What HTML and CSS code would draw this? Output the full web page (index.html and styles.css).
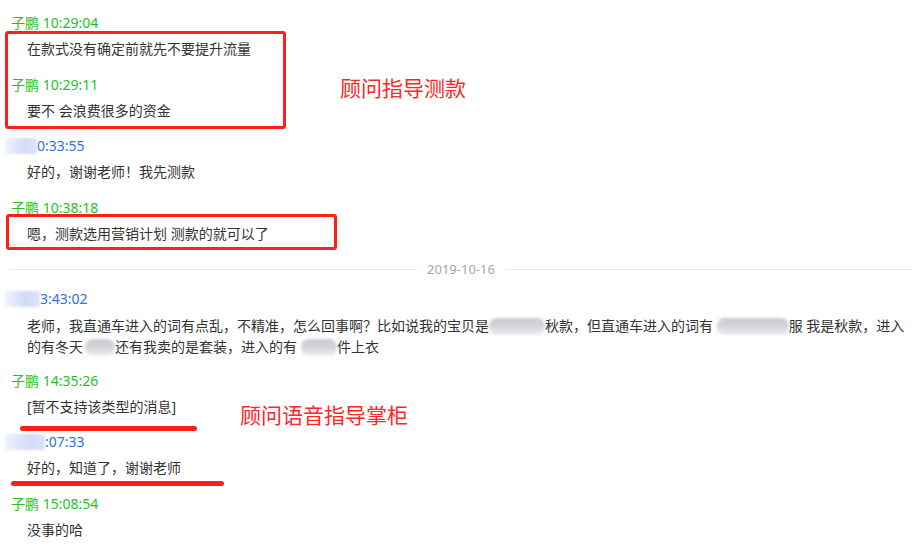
FILE: index.html
```html
<!DOCTYPE html>
<html>
<head>
  <title>聊天记录</title>
<link rel="stylesheet" href="styles.css">
</head>
<body>
  <div class="chat">
    <div class="msg">
      <div class="head">子鹏 10:29:04</div>
      <div class="body">在款式没有确定前就先不要提升流量</div>
    </div>
    <div class="msg">
      <div class="head">子鹏 10:29:11</div>
      <div class="body">要不 会浪费很多的资金</div>
    </div>
    <div class="msg">
      <div class="head buyer"><span class="mask mask-a"></span>0:33:55</div>
      <div class="body">好的，谢谢老师！我先测款</div>
    </div>
    <div class="msg">
      <div class="head">子鹏 10:38:18</div>
      <div class="body">嗯，测款选用营销计划 测款的就可以了</div>
    </div>

    <div class="date-line"><span>2019-10-16</span></div>

    <div class="msg">
      <div class="head buyer"><span class="mask mask-b"></span>3:43:02</div>
      <div class="body multi">老师，我直通车进入的词有点乱，不精准，怎么回事啊？比如说我的宝贝是<span class="blur blur-1"></span>秋款，但直通车进入的词有 <span class="blur blur-2"></span>服 我是秋款，进入<br>的有冬天<span class="blur blur-3"></span>还有我卖的是套装，进入的有<span class="blur blur-4"></span>件上衣</div>
    </div>
    <div class="msg">
      <div class="head">子鹏 14:35:26</div>
      <div class="body">[暂不支持该类型的消息]</div>
    </div>
    <div class="msg">
      <div class="head buyer"><span class="mask mask-c"></span>:07:33</div>
      <div class="body">好的，知道了，谢谢老师</div>
    </div>
    <div class="msg">
      <div class="head">子鹏 15:08:54</div>
      <div class="body">没事的哈</div>
    </div>

    <!-- annotations drawn over the chat -->
    <div class="mark box-1"></div>
    <div class="mark box-2"></div>
    <div class="note note-1">顾问指导测款</div>
    <div class="note note-2">顾问语音指导掌柜</div>
    <div class="stroke stroke-1"></div>
    <div class="stroke stroke-2"></div>
  </div>
</body>
</html>
```

FILE: styles.css
```css
body {
  margin: 0;
  background-color: #fff;
}
.chat {
  position: relative;
  width: 912px;
  height: 545px;
  overflow: hidden;
  padding-top: 13px;
  box-sizing: border-box;
  font-family: "Noto Sans", "Noto Sans CJK SC", sans-serif;
  font-size: 14px;
}
.msg {
  margin-bottom: 15.5px;
}
.head {
  padding-left: 11px;
  line-height: 20px;
  height: 20px;
  color: #1ec41e;
}
.head.buyer {
  color: #2f72e4;
}
.body {
  padding-left: 27px;
  margin-top: 6px;
  line-height: 20px;
  color: #333;
  white-space: nowrap;
}
.body.multi {
  line-height: 21px;
}
.msg:has(.multi) {
  margin-bottom: 13.5px;
}
.mask {
  display: inline-block;
  height: 16px;
  margin-left: -6px;
  vertical-align: -3px;
  background: linear-gradient(90deg, #f0f3fd, #d2dbf7 60%, #dce3fa);
  filter: blur(1px);
}
.mask-a {
  width: 32px;
}
.mask-b {
  width: 35px;
}
.mask-c {
  width: 40px;
}
.blur {
  display: inline-block;
  height: 17px;
  vertical-align: -4px;
  border-radius: 8px;
  background: linear-gradient(180deg, #c8c8cc, #d8d8dc 55%, #eeeef0);
  filter: blur(1.5px);
}
.blur-1 {
  width: 56px;
}
.blur-2 {
  width: 72px;
}
.blur-3 {
  width: 30px;
  margin-left: 2px;
}
.blur-4 {
  width: 36px;
  margin-left: 4px;
}
.date-line {
  display: flex;
  align-items: center;
  gap: 10px;
  margin: 2px 0 10px 10px;
  height: 20px;
  color: #a5a5ab;
  font-size: 13px;
}
.date-line::before,
.date-line::after {
  content: "";
  flex: 1;
  border-top: 1px solid #e9e9ec;
}
.mark {
  position: absolute;
  border: 3px solid #ff1f1a;
  border-radius: 3px;
}
.box-1 {
  left: 5px;
  top: 31px;
  width: 275px;
  height: 92px;
}
.box-2 {
  left: 6px;
  top: 214px;
  width: 325px;
  height: 30px;
}
.note {
  position: absolute;
  color: #ff2626;
  font-family: "Noto Sans CJK SC", sans-serif;
  font-size: 21px;
  line-height: 28px;
}
.note-1 {
  left: 340px;
  top: 73px;
}
.note-2 {
  left: 240px;
  top: 400px;
}
.stroke {
  position: absolute;
  height: 5px;
  border-radius: 3px;
  background-color: #ff1f1a;
}
.stroke-1 {
  left: 20px;
  top: 426px;
  width: 177px;
}
.stroke-2 {
  left: 11px;
  top: 481px;
  width: 213px;
}
```
